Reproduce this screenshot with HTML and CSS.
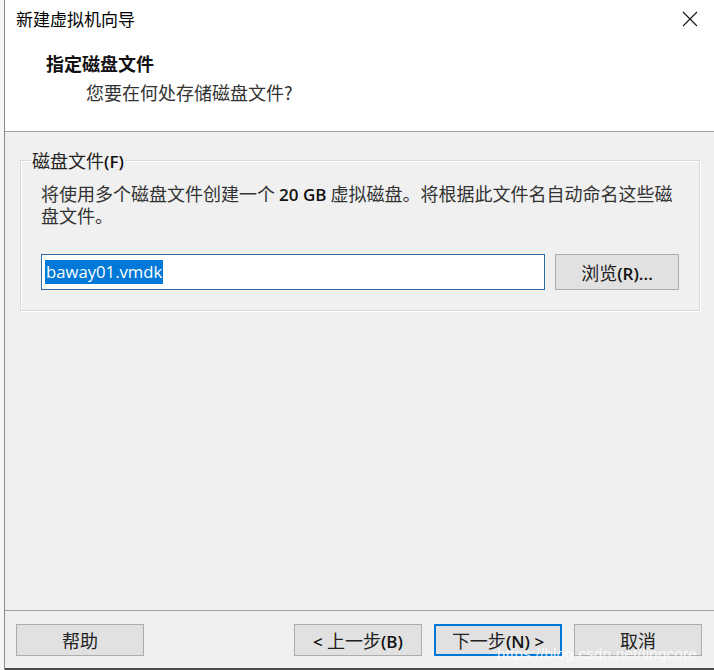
FILE: index.html
```html
<!DOCTYPE html>
<html>
<head>
  <meta charset=utf-8>
  <title>新建虚拟机向导</title>
  <link rel="stylesheet" href="styles.css">
</head>
<body>

<div class=edge></div>
<div class=window>
  <div class=titlebar>
    <span class=caption>新建虚拟机向导</span>
    <svg class=close width=16 height=16 viewBox="0 0 16 16">
      <path d="M1 1 L15 15 M15 1 L1 15" stroke="#111" stroke-width="1.1" fill="none"/>
    </svg>
  </div>
  <div class=header>
    <div class=heading>指定磁盘文件</div>
    <div class=sub>您要在何处存储磁盘文件?</div>
  </div>
  <div class=content>
    <fieldset class=group>
      <legend>磁盘文件<span class=lat>(F)</span></legend>
      <p class=info>将使用多个磁盘文件创建一个 <span class=lat>20 GB</span> 虚拟磁盘。将根据此文件名自动命名这些磁盘文件。</p>
      <div class=fileRow>
        <div class=field><span class=sel>baway01.vmdk</span></div>
        <button class=btn>浏览<span class=lat>(R)...</span></button>
      </div>
    </fieldset>
  </div>
  <div class=footer>
    <button class=btn>帮助</button>
    <div class=navBtns>
      <button class=btn><span class=lat>&lt;</span> 上一步<span class=lat>(B)</span></button>
      <button class='btn default'>下一步<span class=lat>(N) &gt;</span></button>
      <button class=btn>取消</button>
    </div>
  </div>
</div>
<div class=mark>https://blog.csdn.net/lingcore</div>

</body>
</html>
```

FILE: styles.css
```css
* {
  box-sizing: border-box;
  }
html, body {
  height: 100%;
  }
body {
  margin: 0;
  display: flex;
  overflow: hidden;
  background: #f4f4f4;
  font: normal 18px "Noto Sans CJK SC", sans-serif;
  color: #222;
  }
.edge {
  width: 5px;
  background: #f6f6f6;
  border-right: 1px solid #8a8a8a;
  }
.window {
  flex: 1;
  display: flex;
  flex-direction: column;
  border-bottom: 2px solid #4a4a4a;
  background: #f0f0f0;
  }
.titlebar {
  height: 38px;
  background: #fff;
  display: flex;
  align-items: center;
  justify-content: space-between;
  padding: 0 16px 0 11px;
  }
.caption {
  font-size: 17px;
  color: #000;
  line-height: 22px;
  }
.header {
  height: 94px;
  background: #fff;
  border-bottom: 1px solid #a0a0a0;
  padding: 13px 0 0 41px;
  }
.heading {
  font-weight: bold;
  line-height: 24px;
  color: #111;
  }
.sub {
  line-height: 24px;
  margin: 5px 0 0 40px;
  color: #333;
  }
.lat {
  font-family: "Open Sans", "Noto Sans CJK SC", sans-serif;
  font-size: 17px;
  font-weight: 600;
  color: #111;
  line-height: 1;
  }
.content {
  flex: 1;
  padding: 17px 14px 0 15px;
  }
.group {
  margin: 0;
  padding: 11px 20px 20px 20px;
  border: 1px solid #d9d9d9;
  box-shadow: inset 1px 1px 0 #fff, 1px 1px 0 #fff;
  }
.group legend {
  margin-left: -10px;
  padding: 0 1px;
  line-height: 22px;
  color: #222;
  }
.info {
  margin: 0;
  line-height: 22px;
  color: #333;
  }
.fileRow {
  display: flex;
  gap: 10px;
  margin-top: 28px;
  }
.field {
  flex: 1;
  height: 36px;
  background: #fff;
  border: 1px solid #2b6ca3;
  padding: 3px 0 0 3px;
  display: flex;
  align-items: center;
  }
.sel {
  background: #0078d7;
  color: #fff;
  font: normal 16.7px "Open Sans", sans-serif;
  line-height: 24px;
  padding: 0 1px;
  margin-top: -4px;
  }
.btn {
  width: 124px;
  height: 36px;
  background: #e1e1e1;
  border: 1px solid #adadad;
  font: normal 18px "Noto Sans CJK SC", sans-serif;
  color: #222;
  padding: 0;
  }
.footer {
  border-top: 1px solid #a0a0a0;
  padding: 13px 12px 12px 11px;
  display: flex;
  justify-content: space-between;
  }
.footer .btn {
  width: 128px;
  height: 32px;
  }
.navBtns {
  display: flex;
  gap: 12px;
  }
.btn.default {
  border: 2px solid #0078d7;
  }
.mark {
  position: absolute;
  left: 497px;
  top: 645px;
  font: normal 15px "Liberation Sans", sans-serif;
  color: rgba(255, 255, 255, 0.85);
  letter-spacing: 0.3px;
  }
```
